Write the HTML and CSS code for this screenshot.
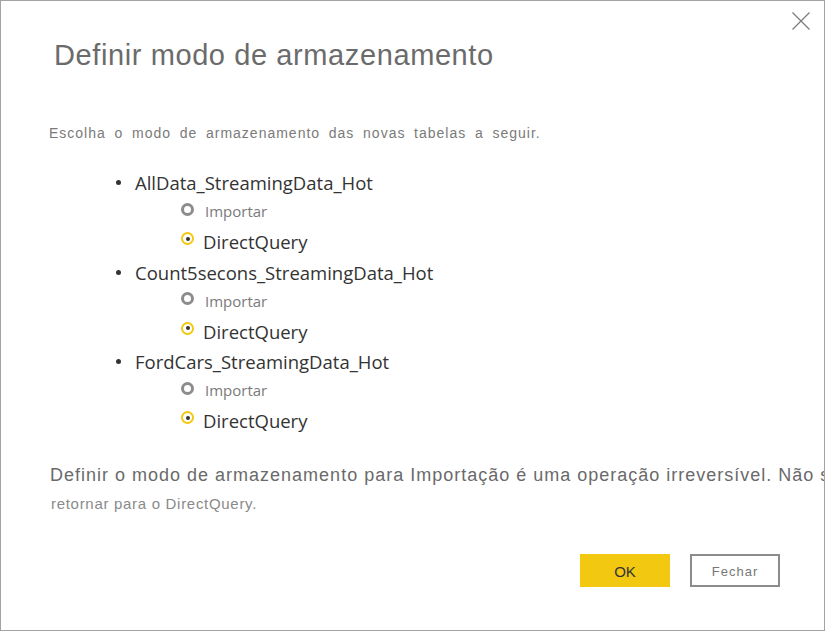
FILE: index.html
```html
<!DOCTYPE html>
<html lang="pt">
<head>
<meta charset="utf-8">
<title>Definir modo de armazenamento</title>
<link rel="stylesheet" href="styles.css">
</head>
<body>
<div class="dialog">
  <button class="close" aria-label="Fechar">
    <svg width="18" height="18" viewBox="0 0 18 18"><path d="M0.5 0.5 L17.5 17.5 M17.5 0.5 L0.5 17.5" stroke="#7a7a7a" stroke-width="1.2" fill="none"/></svg>
  </button>
  <h1 class="title">Definir modo de armazenamento</h1>
  <p class="intro">Escolha o modo de armazenamento das novas tabelas a seguir.</p>
  <ul class="tables">
    <li class="table">
      <div class="table-name"><span class="bullet"></span>AllData_StreamingData_Hot</div>
      <div class="option option-import"><span class="radio"></span><span class="label">Importar</span></div>
      <div class="option option-dq"><span class="radio checked"></span><span class="label">DirectQuery</span></div>
    </li>
    <li class="table">
      <div class="table-name"><span class="bullet"></span>Count5secons_StreamingData_Hot</div>
      <div class="option option-import"><span class="radio"></span><span class="label">Importar</span></div>
      <div class="option option-dq"><span class="radio checked"></span><span class="label">DirectQuery</span></div>
    </li>
    <li class="table">
      <div class="table-name"><span class="bullet"></span>FordCars_StreamingData_Hot</div>
      <div class="option option-import"><span class="radio"></span><span class="label">Importar</span></div>
      <div class="option option-dq"><span class="radio checked"></span><span class="label">DirectQuery</span></div>
    </li>
  </ul>
  <div class="warning">
    <p class="warn-main">Definir o modo de armazenamento para Importação é uma operação irreversível. Não será possível</p>
    <p class="warn-sub">retornar para o DirectQuery.</p>
  </div>
  <div class="actions">
    <button class="btn btn-primary">OK</button>
    <button class="btn btn-secondary">Fechar</button>
  </div>
</div>
</body>
</html>
```
FILE: styles.css
```css
html, body {
  margin: 0;
  padding: 0;
  background: #ffffff;
}

.dialog {
  position: relative;
  box-sizing: border-box;
  width: 825px;
  height: 631px;
  border: 1px solid #a3a3a3;
  padding: 36px 44px 0 48px;
  overflow: hidden;
  font-family: "Liberation Sans", Arial, sans-serif;
  background: #ffffff;
}

.close {
  position: absolute;
  top: 11px;
  right: 14px;
  width: 18px;
  height: 18px;
  padding: 0;
  margin: 0;
  border: 0;
  background: transparent;
  display: block;
}

.close svg {
  display: block;
}

.title {
  margin: 0 0 0 5px;
  font-weight: normal;
  font-size: 29px;
  line-height: 36px;
  letter-spacing: 0.6px;
  color: #6b6b6b;
}

.intro {
  margin: 50px 0 0 0;
  font-size: 14px;
  line-height: 20px;
  letter-spacing: 1px;
  word-spacing: 3.8px;
  color: #7a7a7a;
}

.tables {
  list-style: none;
  margin: 25px 0 0 0;
  padding: 0 0 0 67px;
  font-family: "Open Sans", "Noto Sans", sans-serif;
}

.table-name {
  display: flex;
  align-items: center;
  height: 29px;
  font-size: 18.5px;
  line-height: 29px;
  color: #333333;
}

.bullet {
  width: 5px;
  height: 5px;
  border-radius: 50%;
  background: #333333;
  margin-right: 14px;
  flex: none;
}

.option {
  display: flex;
  align-items: center;
  padding-left: 65px;
}

.option-import {
  height: 29px;
  font-size: 15px;
  line-height: 29px;
  color: #7a7a7a;
}

.option-dq {
  height: 31.5px;
  font-size: 18.5px;
  line-height: 31.5px;
  color: #333333;
}

.radio {
  box-sizing: border-box;
  width: 13px;
  height: 13px;
  border-radius: 50%;
  border: 3px solid #8c8c8c;
  background: #ffffff;
  flex: none;
  margin-right: 11px;
  margin-bottom: 5px;
}

.option-dq .radio {
  margin-right: 9px;
  margin-bottom: 6px;
}

.radio.checked {
  border: 2.5px solid #f2c811;
  display: flex;
  align-items: center;
  justify-content: center;
}

.radio.checked::after {
  content: "";
  width: 4px;
  height: 4px;
  border-radius: 50%;
  background: #333333;
}

.warning {
  margin-top: 26px;
  margin-right: -44px;
}

.warn-main {
  margin: 0 0 0 1px;
  font-size: 18px;
  line-height: 24px;
  letter-spacing: 1px;
  color: #6a6a6a;
  white-space: nowrap;
}

.warn-sub {
  margin: 7px 0 0 2px;
  font-size: 15px;
  line-height: 20px;
  letter-spacing: 0.7px;
  color: #8a8a8a;
  white-space: nowrap;
}

.actions {
  display: flex;
  justify-content: flex-end;
  gap: 20px;
  margin-top: 40px;
}

.btn {
  box-sizing: border-box;
  width: 90px;
  height: 33px;
  margin: 0;
  padding: 2px 0 0 0;
  font-family: "Liberation Sans", Arial, sans-serif;
  cursor: pointer;
}

.btn-primary {
  border: 0;
  background: #f2c811;
  color: #333333;
  font-size: 15px;
}

.btn-secondary {
  border: 2px solid #8c8c8c;
  background: #ffffff;
  color: #777777;
  font-size: 13px;
  letter-spacing: 1px;
}
```
